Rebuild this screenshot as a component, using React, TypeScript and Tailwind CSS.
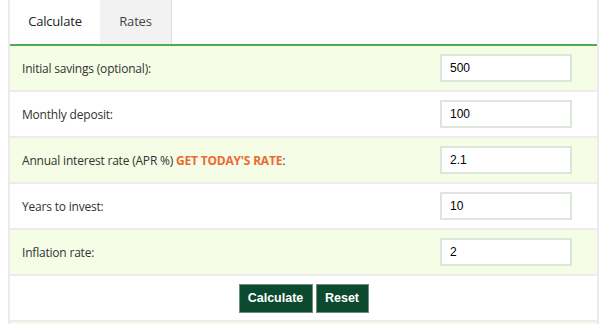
import { useState } from "react";

const rows = [
  { label: "Initial savings (optional):", value: "500" },
  { label: "Monthly deposit:", value: "100" },
  { label: "Annual interest rate (APR %)", value: "2.1", link: "GET TODAY'S RATE" },
  { label: "Years to invest:", value: "10" },
  { label: "Inflation rate:", value: "2" },
];

export default function App() {
  const [tab, setTab] = useState("calc");

  return (
    <div className="h-[324px] w-[600px] overflow-hidden bg-white pl-2 pr-px font-['Open_Sans',sans-serif] text-[#333]">
      <div className="border-x-2 border-[#ebebeb]">
        <div className="flex h-[46px] border-b-2 border-[#4cae4c]">
          <button
            onClick={() => setTab("calc")}
            className="w-[90px] bg-white text-[13px] tracking-[-0.2px] text-[#222]"
          >
            Calculate
          </button>
          <button
            onClick={() => setTab("rates")}
            className="w-[72px] border-r border-[#dedede] bg-[#f2f2f2] text-[13px] tracking-[-0.2px] text-[#444]"
          >
            Rates
          </button>
        </div>

        {tab === "calc" &&
          rows.map((row, i) => (
            <div
              key={row.label}
              className={
                "flex h-[46px] items-center border-b-2 border-[#ececec] pl-3 pr-[25px] " +
                (i % 2 === 0 ? "bg-[#f5fde6]" : "bg-white")
              }
            >
              <span className="flex-1 pt-px text-[12px] tracking-[-0.2px]">
                {row.label}
                {row.link && (
                  <>
                    {" "}
                    <a className="font-bold text-[#ea6a34]" href="#">
                      {row.link}
                    </a>
                    :
                  </>
                )}
              </span>
              <input
                defaultValue={row.value}
                className="h-[28px] w-[132px] border-2 border-[#dde6da] bg-white px-2 font-['Liberation_Sans',Arial,sans-serif] text-[12px] text-black outline-none"
              />
            </div>
          ))}

        <div className="flex h-[46px] items-center justify-center gap-[3px] border-b-2 border-[#ececec] bg-white pt-px">
          <button className="h-[29px] w-[74px] border border-[#6f8f7c] bg-[#0b4a2e] font-['Liberation_Sans',Arial,sans-serif] text-[12.5px] font-bold text-white">
            Calculate
          </button>
          <button className="h-[29px] w-[53px] border border-[#6f8f7c] bg-[#0b4a2e] font-['Liberation_Sans',Arial,sans-serif] text-[12.5px] font-bold text-white">
            Reset
          </button>
        </div>
        <div className="h-4 bg-[#f5fde6]" />
      </div>
    </div>
  );
}
